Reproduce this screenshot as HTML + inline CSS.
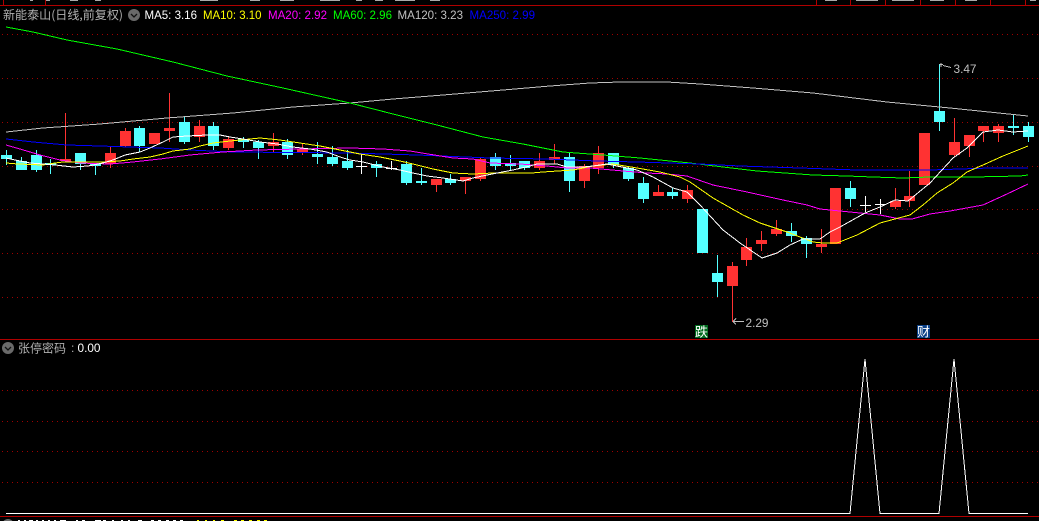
<!DOCTYPE html>
<html><head><meta charset="utf-8"><style>
html,body{margin:0;padding:0;background:#000;width:1039px;height:521px;overflow:hidden}
svg{display:block}
text{font-family:"Liberation Sans","WenQuanYi Zen Hei","Noto Sans CJK SC",sans-serif;font-size:12px}
.cn{font-family:"WenQuanYi Zen Hei","Noto Sans CJK SC",sans-serif}
.l{fill:none;stroke-width:1;shape-rendering:crispEdges}
</style></head><body>
<svg width="1039" height="521" viewBox="0 0 1039 521" xmlns="http://www.w3.org/2000/svg">
<rect width="1039" height="521" fill="#000"/>
<g shape-rendering="crispEdges">
<path d="M0 5.5H1039M0 339.5H1039M0 516.5H1039" stroke="#b00000" fill="none"/>
<path d="M816.5 0V5M850.5 0V5M885.5 0V5M920.5 0V5M955.5 0V5M990.5 0V5M1025.5 0V5M3.5 0V5M45.5 0V5" stroke="#b00000" fill="none"/>
<path d="M2 34.5H1039M2 78.5H1039M2 122.5H1039M2 166.5H1039M2 209.5H1039M2 253.5H1039M2 297.5H1039M2 390.5H1039M2 421.5H1039M2 451.5H1039M2 482.5H1039" stroke="#a00000" stroke-dasharray="1 4" fill="none"/>
<path d="M30 0h3v1h-3zM46 0h4v1h-4zM70 0h8v1h-8zM95 0h6v1h-6zM200 0h18v1h-18zM250 0h10v1h-10zM280 0h14v1h-14zM320 0h20v1h-20zM356 0h6v1h-6zM375 0h8v1h-8zM395 0h20v1h-20zM430 0h10v1h-10zM825 0h12v1h-12zM856 0h22v1h-22zM892 0h22v1h-22zM930 0h14v1h-14zM965 0h12v1h-12zM1030 0h6v1h-6z" fill="#aaa"/>

<path stroke="#ff3232" fill="none" d="M65.5 113V161M110.5 147V168M125.5 128V147M169.5 93V142M199.5 120V142M228.5 137V150M273.5 133V153M302.5 144V155M436.5 179V192M465.5 177V194M480.5 158V181M539.5 153V170M554.5 144V164M584.5 164V188M598.5 146V174M658.5 185V196M687.5 185V203M732.5 262V322M746.5 238V266M761.5 231V251M776.5 220V236M821.5 229V253M895.5 188V209M909.5 171V207M954.5 118V157M969.5 135V157M983.5 126V142M998.5 124V142"/>
<path fill="#ff3232" d="M60 159H71V161H60ZM105 153H116V164H105ZM120 131H131V146H120ZM149 133H160V144H149ZM164 128H175V131H164ZM194 126H205V137H194ZM223 139H234V148H223ZM268 142H279V146H268ZM297 149H308V153H297ZM431 179H442V185H431ZM460 177H471V181H460ZM475 159H486V179H475ZM534 161H545V168H534ZM549 157H560V160H549ZM579 166H590V181H579ZM593 153H604V168H593ZM653 192H664V196H653ZM682 190H693V199H682ZM727 266H738V286H727ZM741 247H752V260H741ZM756 240H767V244H756ZM771 229H782V234H771ZM816 244H827V247H816ZM830 188H841V244H830ZM890 201H901V207H890ZM904 196H915V201H904ZM919 133H930V185H919ZM949 142H960V155H949ZM964 135H975V146H964ZM978 126H989V131H978ZM993 126H1004V133H993Z"/>

<path stroke="#54ffff" fill="none" d="M6.5 150V165M21.5 157V170M36.5 150V172M50.5 159V174M80.5 153V170M95.5 163V175M139.5 126V152M184.5 117V144M213.5 122V150M243.5 137V148M258.5 140V159M287.5 139V159M317.5 142V164M332.5 146V166M347.5 150V170M376.5 161V177M406.5 161V185M421.5 168V185M450.5 174V185M495.5 153V170M510.5 155V170M524.5 161V170M569.5 153V192M613.5 153V168M628.5 167V181M643.5 177V203M672.5 188V199M717.5 255V297M791.5 223V242M806.5 236V258M850.5 181V207M939.5 64V131M1013.5 115V135M1028.5 122V142"/>
<path fill="#54ffff" d="M1 155H12V159H1ZM16 161H27V170H16ZM31 155H42V170H31ZM45 163H56V165H45ZM75 153H86V164H75ZM90 164H101V166H90ZM134 128H145V146H134ZM179 122H190V142H179ZM208 126H219V146H208ZM238 139H249V142H238ZM253 142H264V148H253ZM282 142H293V155H282ZM312 154H323V157H312ZM327 157H338V164H327ZM342 161H353V168H342ZM371 164H382V168H371ZM401 164H412V183H401ZM416 181H427V183H416ZM445 179H456V183H445ZM490 157H501V166H490ZM505 163H516V166H505ZM519 161H530V168H519ZM564 157H575V181H564ZM608 153H619V165H608ZM623 168H634V179H623ZM638 183H649V199H638ZM667 192H678V196H667ZM697 209H708V253H697ZM712 273H723V282H712ZM786 231H797V236H786ZM801 238H812V244H801ZM845 188H856V199H845ZM934 111H945V122H934ZM1008 126H1019V128H1008ZM1023 126H1034V137H1023Z"/>

<path stroke="#fff" fill="none" d="M361.5 154V174M356 166.5H367M391.5 161V170M386 168.5H397M865.5 196V212M860 205.5H871M880.5 199V214M875 204.5H886"/>
</g>

<polyline class="l" stroke="#c0c0c0" points="6,132 43,128 100,124 167,118 233,113 293,107 350,103 393,99 443,95 503,90 550,86 590,83 620,82 667,82 700,84 753,88 813,93 887,102 950,108 1028,116"/>
<polyline class="l" stroke="#00ff00" points="6,27 33,32 67,40 117,49 173,62 227,76 283,88 350,103 393,114 437,125 483,137 523,144 563,152 603,155 640,158 690,163 723,167 757,171 813,175 847,176 873,177 903,178 930,177 973,177 1020,176 1028,175"/>
<polyline class="l" stroke="#0000ff" points="6,139 33,142 67,145 100,146 160,148 190,150 233,152 350,153 417,155 490,158 547,159 597,161 637,162 700,164 740,166 800,168 857,170 930,170 990,168 1028,168"/>
<polyline class="l" stroke="#ff00ff" points="6,145 20,149 40,155 60,160 80,163 110,164 133,162 160,159 190,155 223,152 257,150 300,149 350,148 383,149 410,151 428,154 453,158 473,159 490,163 520,164 547,166 567,168 590,168 623,171 647,173 667,174 687,176 713,185 747,192 783,200 807,205 820,209 840,211 860,213 880,215 900,219 912,219 930,214 950,211 983,205 1007,194 1028,184"/>
<polyline class="l" stroke="#ffff00" points="6,163 18,164 43,165 55,163 63,162 87,162 103,162 120,161 133,159 150,157 163,154 173,151 190,149 200,146 213,143 230,141 250,139 260,138 280,140 300,143 320,146 340,150 360,154 380,157 400,161 417,165 433,169 453,173 473,174 493,173 532,173 543,172 573,170 593,166 613,164 637,168 660,172 680,177 690,182 713,198 743,215 760,223 787,232 813,242 823,243 837,243 857,235 880,223 895,219 910,215 923,205 937,193 953,183 967,172 983,165 1003,156 1028,146"/>
<polyline class="l" stroke="#ffffff" points="6,158 15,160 30,163 43,164 55,165 73,167 88,166 103,163 113,160 125,155 140,152 150,148 163,142 173,137 187,136 207,135 220,135 230,137 243,139 260,142 277,144 293,147 310,149 327,152 340,157 350,160 363,162 383,167 400,170 413,173 427,176 443,178 463,181 473,178 487,175 497,173 513,170 530,166 537,164 557,164 567,167 583,167 593,166 607,164 617,166 637,170 653,177 673,188 687,192 700,205 723,230 740,243 762,258 777,253 790,245 803,239 820,239 830,232 840,227 865,213 880,207 895,200 908,201 930,183 953,158 967,148 983,132 998,130 1013,132 1028,131"/>

<polyline class="l" stroke="#ffffff" points="6,513.5 850,513.5 865,359 880,513.5 939,513.5 954,359 969,513.5 1028,513.5"/>

<!-- header -->
<text class="cn" x="3" y="19" fill="#b0b0b0" font-size="12" textLength="120" lengthAdjust="spacingAndGlyphs">新能泰山(日线,前复权)</text>
<circle cx="134" cy="15" r="6" fill="#6a6a6a"/>
<path d="M131 14l3 3 3-3" stroke="#111" stroke-width="1.3" fill="none"/>
<text x="144.5" y="19" fill="#ffffff" textLength="52.5" lengthAdjust="spacingAndGlyphs">MA5: 3.16</text>
<text x="203" y="19" fill="#ffff00" textLength="58.5" lengthAdjust="spacingAndGlyphs">MA10: 3.10</text>
<text x="268" y="19" fill="#ff00ff" textLength="59" lengthAdjust="spacingAndGlyphs">MA20: 2.92</text>
<text x="333" y="19" fill="#00ff00" textLength="59" lengthAdjust="spacingAndGlyphs">MA60: 2.96</text>
<text x="397.5" y="19" fill="#c0c0c0" textLength="65.5" lengthAdjust="spacingAndGlyphs">MA120: 3.23</text>
<text x="469.5" y="19" fill="#0000ff" textLength="65.5" lengthAdjust="spacingAndGlyphs">MA250: 2.99</text>

<!-- high / low -->
<path d="M939.5 64.5H943M941 63v4M943 65.5l8 2" stroke="#c0c0c0" fill="none" shape-rendering="crispEdges"/>
<text x="953.5" y="73" fill="#c0c0c0" textLength="23" lengthAdjust="spacingAndGlyphs">3.47</text>
<path d="M733 321.5H744M733 321.5l3-3M733 321.5l3 3" stroke="#c0c0c0" fill="none" shape-rendering="crispEdges"/>
<text x="745.5" y="327" fill="#c0c0c0" textLength="23" lengthAdjust="spacingAndGlyphs">2.29</text>

<rect x="695" y="325" width="13" height="13" fill="#006a1e"/>
<text class="cn" x="695" y="336.5" fill="#fff" style="font-size:13px">跌</text>
<rect x="917" y="325" width="13" height="13" fill="#0a3f86"/>
<text class="cn" x="917" y="336.5" fill="#fff" style="font-size:13px">财</text>

<!-- lower pane -->
<circle cx="8" cy="348" r="6" fill="#6a6a6a"/>
<path d="M5 347l3 3 3-3" stroke="#111" stroke-width="1.3" fill="none"/>
<text class="cn" x="18" y="352.5" fill="#b0b0b0" textLength="48" lengthAdjust="spacingAndGlyphs">张停密码</text>
<text x="71" y="352" fill="#b0b0b0">:</text>
<text x="77.5" y="352" fill="#ffffff" textLength="23" lengthAdjust="spacingAndGlyphs">0.00</text>

<!-- clipped bottom strip -->
<circle cx="8" cy="525" r="6" fill="#6a6a6a"/>
<path d="M18 520h2v1h-2zM24 520h2v1h-2zM29 520h4v1h-4zM36 520h2v1h-2zM42 520h2v1h-2zM48 520h2v1h-2zM54 520h2v1h-2zM60 520h6v1h-6zM76 520h2v1h-2zM82 520h3v1h-3zM95 520h6v1h-6zM103 520h3v1h-3zM112 520h2v1h-2zM121 520h2v1h-2zM128 520h2v1h-2zM138 520h4v1h-4zM151 520h3v1h-3zM158 520h3v1h-3zM166 520h3v1h-3zM173 520h3v1h-3zM180 520h3v1h-3z" fill="#ffffff" shape-rendering="crispEdges"/>
<path d="M197 520h2v1h-2zM205 520h2v1h-2zM213 520h2v1h-2zM221 520h3v1h-3zM234 520h3v1h-3zM241 520h3v1h-3zM249 520h3v1h-3zM257 520h3v1h-3zM264 520h3v1h-3z" fill="#ffff00" shape-rendering="crispEdges"/>
</svg>
</body></html>
